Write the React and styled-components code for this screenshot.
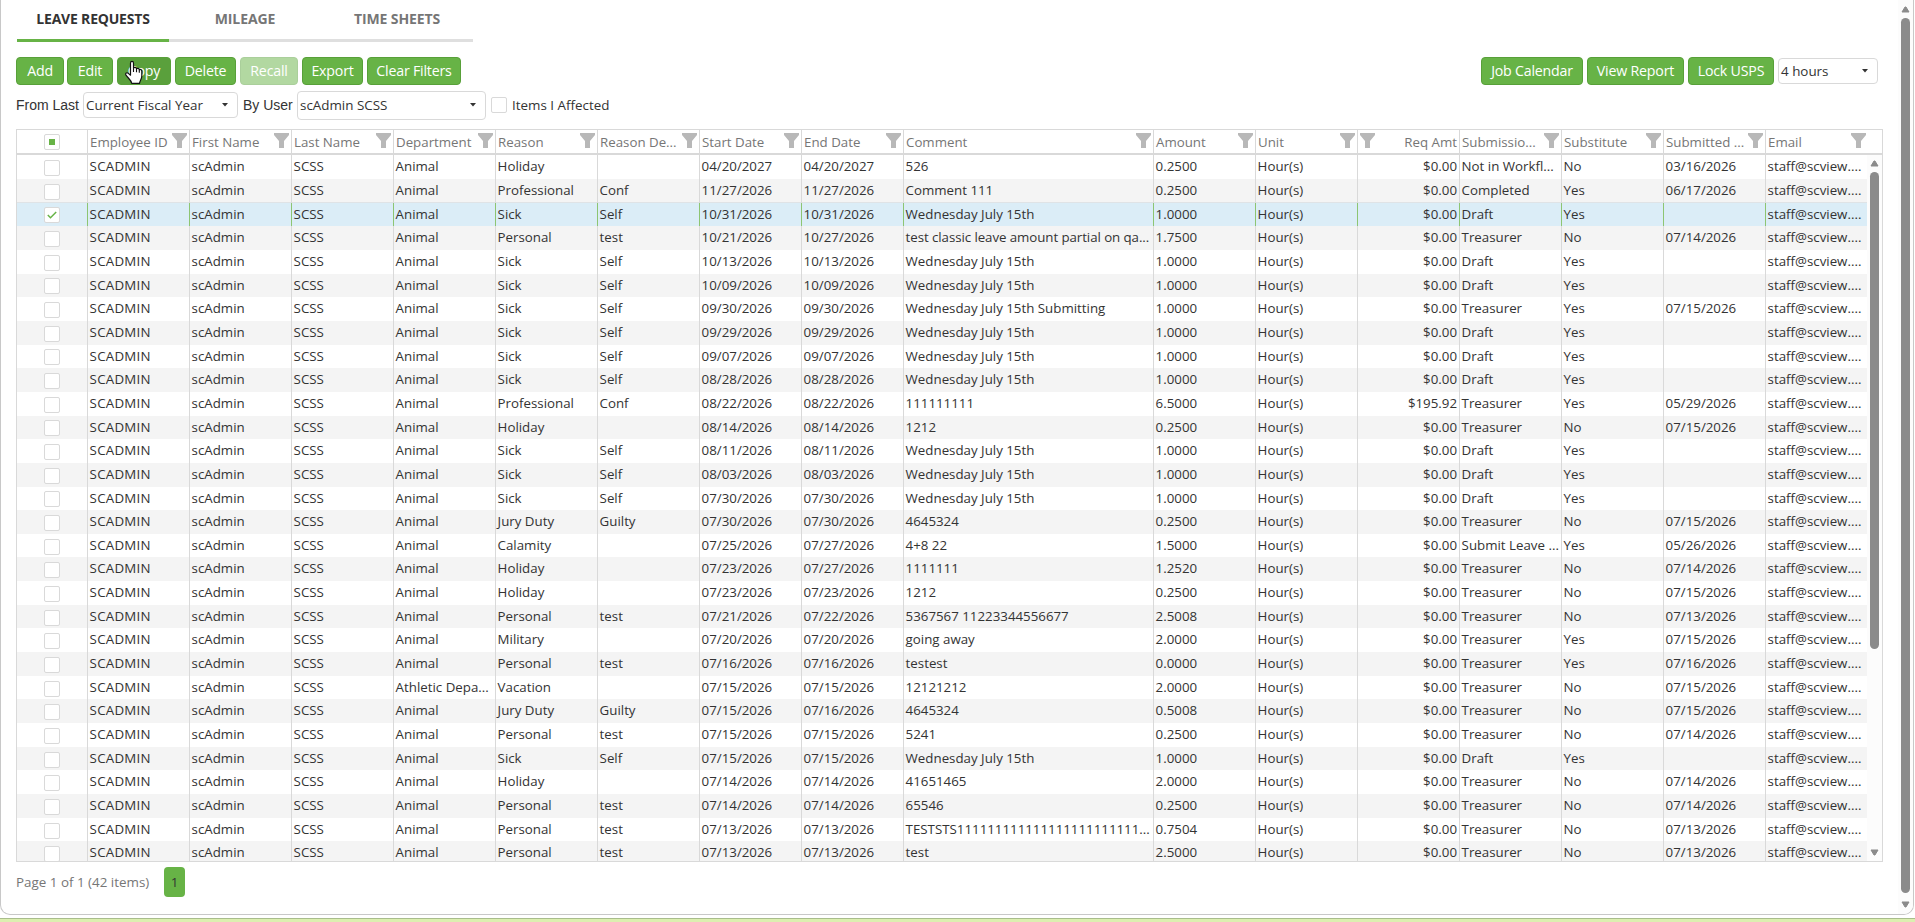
import React from 'react'
import styled, { createGlobalStyle, css } from 'styled-components'

const GlobalStyle = createGlobalStyle`
    * {
        box-sizing: border-box;
    }

    body {
        margin: 0;
        overflow: hidden;
        background: #fff;
        color: #333;
        font-family: 'Open Sans', 'Noto Sans', sans-serif;
        font-size: 13.3px;
    }
`

const Page = styled.div`
    display: flex;
    flex-direction: column;
    gap: 3px;
    height: 922px;
`

const Panel = styled.div`
    display: flex;
    width: 1914px;
    height: 915px;
    border: 1px solid #c8c8c8;
    border-top: 0;
    border-radius: 0 0 10px 10px;
    overflow: hidden;
`

const Footer = styled.div`
    flex: 1;
    border-top: 1px solid #a9bd8c;
    background: #dcefb0;
`

const Content = styled.div`
    flex: 1;
    padding-left: 15px;
`

const Tabs = styled.div`
    display: flex;
    height: 42px;
    margin-left: 1px;
`

const Tab = styled.div`
    width: 152px;
    padding-top: 9px;
    border-bottom: 3px solid ${({ active }) => (active ? '#67b346' : '#dfdfdf')};
    color: ${({ active }) => (active ? '#333' : '#767676')};
    font-size: 14px;
    font-weight: 700;
    line-height: 20px;
    letter-spacing: ${({ active }) => (active ? -0.2 : -0.1)}px;
    text-align: center;
`

const Toolbar = styled.div`
    display: flex;
    align-items: center;
    height: 28px;
    margin: 15px 20px 0 0;
`

const Button = styled.button`
    position: relative;
    flex: none;
    width: ${({ width }) => width}px;
    height: 28px;
    margin: 0 ${({ gap = 4 }) => gap}px 0 0;
    padding: 0 0 1px;
    border: 1px solid #58a039;
    border-radius: 4px;
    background: ${({ hovered }) => (hovered ? '#5aa03c' : '#67b346')};
    color: #fff;
    font: 14.2px 'Open Sans', 'Noto Sans', sans-serif;
    letter-spacing: -0.2px;
    white-space: nowrap;

    &:disabled {
        opacity: 0.5;
    }
`

const Pointer = styled.svg`
    position: absolute;
    top: 2px;
    left: 6px;
`

const Spacer = styled.div`
    flex: 1;
`

const SelectBox = styled.div`
    display: flex;
    align-items: center;
    justify-content: space-between;
    width: ${({ width }) => width}px;
    height: ${({ height }) => height || 26}px;
    margin-right: ${({ gap = 0 }) => gap}px;
    padding: 0 8px 0 2px;
    border: 1px solid #d9d9d9;
    border-radius: 4px;
    background: #fff;
    font-size: 13.4px;
`

const Filters = styled.div`
    display: flex;
    align-items: center;
    height: 30px;
    margin-top: 5px;
`

const Label = styled.span`
    width: ${({ width }) => width}px;
    font: 14px 'Liberation Sans', Arial, sans-serif;
    white-space: nowrap;
`

const CheckLabel = styled.span`
    margin-left: 5px;
    font-size: 13.4px;
    white-space: nowrap;
`

const Check = styled.span`
    display: inline-flex;
    flex: none;
    align-items: center;
    justify-content: center;
    width: 16px;
    height: 16px;
    border: 1px solid #d9d9d9;
    border-radius: 2px;
    background: #fff;
`

const Mixed = styled.span`
    width: 6px;
    height: 6px;
    background: #67b346;
`

const Grid = styled.div`
    width: 1867px;
    height: 733px;
    margin-top: 9px;
    border: 1px solid #d9d9d9;
    overflow: hidden;
`

const columns = css`
    display: grid;
    grid-template-columns: 71px repeat(8, 102px) 250px repeat(6, 102px) 101px;
    grid-template-rows: 100%;
`

const Header = styled.div`
    ${columns}
    height: 25px;
    border-bottom: 2px solid #d9d9d9;
    color: #767676;
`

const HeadCell = styled.div`
    display: flex;
    flex-direction: ${({ right }) => (right ? 'row-reverse' : 'row')};
    align-items: center;
    justify-content: space-between;
    min-width: 0;
    padding: 0 ${({ last }) => (last ? 0 : 2)}px 0 2px;
    border-right: 1px solid ${({ last }) => (last ? 'transparent' : '#d9d9d9')};

    svg {
        flex: none;
        margin-bottom: 3px;
    }
`

const HeadText = styled.span`
    line-height: 20px;
    white-space: nowrap;
`

const Body = styled.div`
    display: flex;
    height: 706px;
`

const Rows = styled.div`
    flex: none;
    width: 1850px;
    height: 706px;
    padding-top: 0.33px;
    overflow: hidden;
`

const Row = styled.div`
    ${columns}
    height: 23.67px;
    background: ${({ selected, odd }) => (selected ? '#dbedf7' : odd ? '#f4f4f4' : '#fff')};
    box-shadow: ${({ selected }) => (selected ? '0 -1px #dfe3e6, 0 1px #dfe3e6' : 'none')};
`

const Cell = styled.div`
    overflow: hidden;
    min-width: 0;
    padding: 0 2px 0 1.6px;
    border-right: 1px solid
        ${({ last, selected }) => (last ? 'transparent' : selected ? '#8dc572' : '#d9d9d9')};
    letter-spacing: ${({ spacing = 0 }) => spacing}px;
    line-height: 23.67px;
    text-align: ${({ right }) => (right ? 'right' : 'left')};
    white-space: nowrap;
`

const CheckCell = styled.div`
    display: flex;
    align-items: center;
    justify-content: center;
    padding-top: ${({ head }) => (head ? 1 : 2)}px;
    border-right: 1px solid ${({ selected }) => (selected ? '#8dc572' : '#d9d9d9')};
`

const Scrollbar = styled.div`
    display: flex;
    flex: none;
    flex-direction: column;
    align-items: center;
    width: 15px;
    padding: ${({ pad }) => pad};
    background: #fcfcfc;
`

const Thumb = styled.div`
    width: 9px;
    height: ${({ height }) => height}px;
    margin: 5px 0 auto;
    border-radius: 5px;
    background: #8b8b8b;
`

const Pager = styled.div`
    display: flex;
    align-items: center;
    height: 30px;
    margin-top: 5px;
    color: #767676;
    font-size: 13.4px;
`

const PageInfo = styled.span`
    width: 148px;
`

const PageNumber = styled.span`
    width: 21px;
    border-radius: 4px;
    background: #67b346;
    color: #333;
    line-height: 30px;
    text-align: center;
`

const headers = [
    'Employee ID',
    'First Name',
    'Last Name',
    'Department',
    'Reason',
    'Reason De...',
    'Start Date',
    'End Date',
    'Comment',
    'Amount',
    'Unit',
    'Req Amt',
    'Submissio...',
    'Substitute',
    'Submitted ...',
    'Email',
]

const WED = 'Wednesday July 15th'

// reason, reason description, start, end, comment, amount, status, substitute, submitted, cost
const requests = [
    ['Holiday', '', '04/20/2027', '04/20/2027', '526', '0.2500', 'Not in Workfl...', 'No', '03/16/2026'],
    ['Professional', 'Conf', '11/27/2026', '11/27/2026', 'Comment 111', '0.2500', 'Completed', 'Yes', '06/17/2026'],
    ['Sick', 'Self', '10/31/2026', '10/31/2026', WED, '1.0000', 'Draft', 'Yes', ''],
    ['Personal', 'test', '10/21/2026', '10/27/2026', 'test classic leave amount partial on qa...', '1.7500', 'Treasurer', 'No', '07/14/2026'],
    ['Sick', 'Self', '10/13/2026', '10/13/2026', WED, '1.0000', 'Draft', 'Yes', ''],
    ['Sick', 'Self', '10/09/2026', '10/09/2026', WED, '1.0000', 'Draft', 'Yes', ''],
    ['Sick', 'Self', '09/30/2026', '09/30/2026', `${WED} Submitting`, '1.0000', 'Treasurer', 'Yes', '07/15/2026'],
    ['Sick', 'Self', '09/29/2026', '09/29/2026', WED, '1.0000', 'Draft', 'Yes', ''],
    ['Sick', 'Self', '09/07/2026', '09/07/2026', WED, '1.0000', 'Draft', 'Yes', ''],
    ['Sick', 'Self', '08/28/2026', '08/28/2026', WED, '1.0000', 'Draft', 'Yes', ''],
    ['Professional', 'Conf', '08/22/2026', '08/22/2026', '111111111', '6.5000', 'Treasurer', 'Yes', '05/29/2026', '$195.92'],
    ['Holiday', '', '08/14/2026', '08/14/2026', '1212', '0.2500', 'Treasurer', 'No', '07/15/2026'],
    ['Sick', 'Self', '08/11/2026', '08/11/2026', WED, '1.0000', 'Draft', 'Yes', ''],
    ['Sick', 'Self', '08/03/2026', '08/03/2026', WED, '1.0000', 'Draft', 'Yes', ''],
    ['Sick', 'Self', '07/30/2026', '07/30/2026', WED, '1.0000', 'Draft', 'Yes', ''],
    ['Jury Duty', 'Guilty', '07/30/2026', '07/30/2026', '4645324', '0.2500', 'Treasurer', 'No', '07/15/2026'],
    ['Calamity', '', '07/25/2026', '07/27/2026', '4+8 22', '1.5000', 'Submit Leave ...', 'Yes', '05/26/2026'],
    ['Holiday', '', '07/23/2026', '07/27/2026', '1111111', '1.2520', 'Treasurer', 'No', '07/14/2026'],
    ['Holiday', '', '07/23/2026', '07/23/2026', '1212', '0.2500', 'Treasurer', 'No', '07/15/2026'],
    ['Personal', 'test', '07/21/2026', '07/22/2026', '5367567 11223344556677', '2.5008', 'Treasurer', 'No', '07/13/2026'],
    ['Military', '', '07/20/2026', '07/20/2026', 'going away', '2.0000', 'Treasurer', 'Yes', '07/15/2026'],
    ['Personal', 'test', '07/16/2026', '07/16/2026', 'testest', '0.0000', 'Treasurer', 'Yes', '07/16/2026'],
    ['Vacation', '', '07/15/2026', '07/15/2026', '12121212', '2.0000', 'Treasurer', 'No', '07/15/2026'],
    ['Jury Duty', 'Guilty', '07/15/2026', '07/16/2026', '4645324', '0.5008', 'Treasurer', 'No', '07/15/2026'],
    ['Personal', 'test', '07/15/2026', '07/15/2026', '5241', '0.2500', 'Treasurer', 'No', '07/14/2026'],
    ['Sick', 'Self', '07/15/2026', '07/15/2026', WED, '1.0000', 'Draft', 'Yes', ''],
    ['Holiday', '', '07/14/2026', '07/14/2026', '41651465', '2.0000', 'Treasurer', 'No', '07/14/2026'],
    ['Personal', 'test', '07/14/2026', '07/14/2026', '65546', '0.2500', 'Treasurer', 'No', '07/14/2026'],
    ['Personal', 'test', '07/13/2026', '07/13/2026', `TESTSTS${'1'.repeat(24)}...`, '0.7504', 'Treasurer', 'No', '07/13/2026'],
    ['Personal', 'test', '07/13/2026', '07/13/2026', 'test', '2.5000', 'Treasurer', 'No', '07/13/2026'],
]

const toCells = ([reason, detail, start, end, comment, amount, status, substitute, submitted, cost], index) => [
    'SCADMIN',
    'scAdmin',
    'SCSS',
    index === 22 ? 'Athletic Depa...' : 'Animal',
    reason,
    detail,
    start,
    end,
    comment,
    amount,
    'Hour(s)',
    cost || '$0.00',
    status,
    substitute,
    submitted,
    'staff@scview....',
]

const getSpacing = (text) => {
    if (text === 'SCADMIN') return 0.25
    return text.length > 35 ? -0.07 : 0
}

const Funnel = () => (
    <svg width="15" height="15" viewBox="0 0 15 15">
        <path d="M0 0h15v2L10 8v7H5V8L0 2z" fill="#b8b8b8" />
    </svg>
)

const Caret = () => (
    <svg width="8" height="4" viewBox="0 0 8 4">
        <path d="M1 0h6L4 3.5z" fill="#333" />
    </svg>
)

const Arrow = ({ down }) => (
    <svg width="9" height="7" viewBox="0 0 9 7">
        <path
            d={down ? 'M1 1h7L5 6H4z' : 'M1 6h7L5 1H4z'}
            fill="#8b8b8b"
            stroke="#8b8b8b"
            strokeLinejoin="round"
        />
    </svg>
)

const Tick = () => (
    <svg width="10" height="8" viewBox="0 0 10 8">
        <path d="M.8 4 3.5 6.7 9.2 1" fill="none" stroke="#67b346" strokeWidth="1.5" />
    </svg>
)

const Hand = () => (
    <Pointer width="20" height="25" viewBox="0 0 20 25">
        <path
            d="M6.5 15.2V3.2C6.5 .8 9.5.8 9.5 3.2V8.2C10 6.9 12.4 7.2 12.5 8.8 13.3 7.8 15.2 8.4 15.3 9.8 16.3 9 17.8 9.8 17.8 11.2V16C17.8 19 16 20.3 15.5 23.3H7.7C7.4 20.4 4.3 18.3 2 15.2.8 13.5 2.5 12.2 4 13.1z"
            fill="#fff"
            stroke="#111"
            strokeWidth="1.2"
            strokeLinejoin="round"
        />
        <path d="M9.5 8.2V12M12.5 8.8V12.3M15.3 9.8V12.8" fill="none" stroke="#111" strokeWidth="1.1" />
    </Pointer>
)

const Select = ({ children, ...rest }) => (
    <SelectBox {...rest}>
        {children}
        <Caret />
    </SelectBox>
)

const App = () => (
    <Page>
        <GlobalStyle />
        <Panel>
            <Content>
                <Tabs>
                    <Tab active>LEAVE REQUESTS</Tab>
                    <Tab>MILEAGE</Tab>
                    <Tab>TIME SHEETS</Tab>
                </Tabs>
                <Toolbar>
                    <Button width={48} gap={3}>
                        Add
                    </Button>
                    <Button width={46}>Edit</Button>
                    <Button width={54} hovered>
                        Copy
                        <Hand />
                    </Button>
                    <Button width={61}>Delete</Button>
                    <Button width={58} disabled>
                        Recall
                    </Button>
                    <Button width={61}>Export</Button>
                    <Button width={94}>Clear Filters</Button>
                    <Spacer />
                    <Button width={102}>Job Calendar</Button>
                    <Button width={97}>View Report</Button>
                    <Button width={86}>Lock USPS</Button>
                    <Select width={100}>4 hours</Select>
                </Toolbar>
                <Filters>
                    <Label width={67}>From Last</Label>
                    <Select width={155} gap={5}>
                        Current Fiscal Year
                    </Select>
                    <Label width={54}>By User</Label>
                    <Select width={189} height={29} gap={5}>
                        scAdmin SCSS
                    </Select>
                    <Check />
                    <CheckLabel>Items I Affected</CheckLabel>
                </Filters>
                <Grid>
                    <Header>
                        <CheckCell head>
                            <Check>
                                <Mixed />
                            </Check>
                        </CheckCell>
                        {headers.map((name, i) => (
                            <HeadCell key={name} right={name === 'Req Amt'} last={i === headers.length - 1}>
                                <HeadText>{name}</HeadText>
                                <Funnel />
                            </HeadCell>
                        ))}
                    </Header>
                    <Body>
                        <Rows>
                            {requests.map((request, i) => (
                                <Row key={i} odd={i % 2 === 1} selected={i === 2}>
                                    <CheckCell selected={i === 2}>
                                        <Check>{i === 2 && <Tick />}</Check>
                                    </CheckCell>
                                    {toCells(request, i).map((text, j) => (
                                        <Cell
                                            key={headers[j]}
                                            right={j === 11}
                                            last={j === 15}
                                            selected={i === 2}
                                            spacing={getSpacing(text)}
                                        >
                                            {text}
                                        </Cell>
                                    ))}
                                </Row>
                            ))}
                        </Rows>
                        <Scrollbar pad="5px 0">
                            <Arrow />
                            <Thumb height={477} />
                            <Arrow down />
                        </Scrollbar>
                    </Body>
                </Grid>
                <Pager>
                    <PageInfo>Page 1 of 1 (42 items)</PageInfo>
                    <PageNumber>1</PageNumber>
                </Pager>
            </Content>
            <Scrollbar pad="6px 0">
                <Arrow />
                <Thumb height={875} />
                <Arrow down />
            </Scrollbar>
        </Panel>
        <Footer />
    </Page>
)

export default App
